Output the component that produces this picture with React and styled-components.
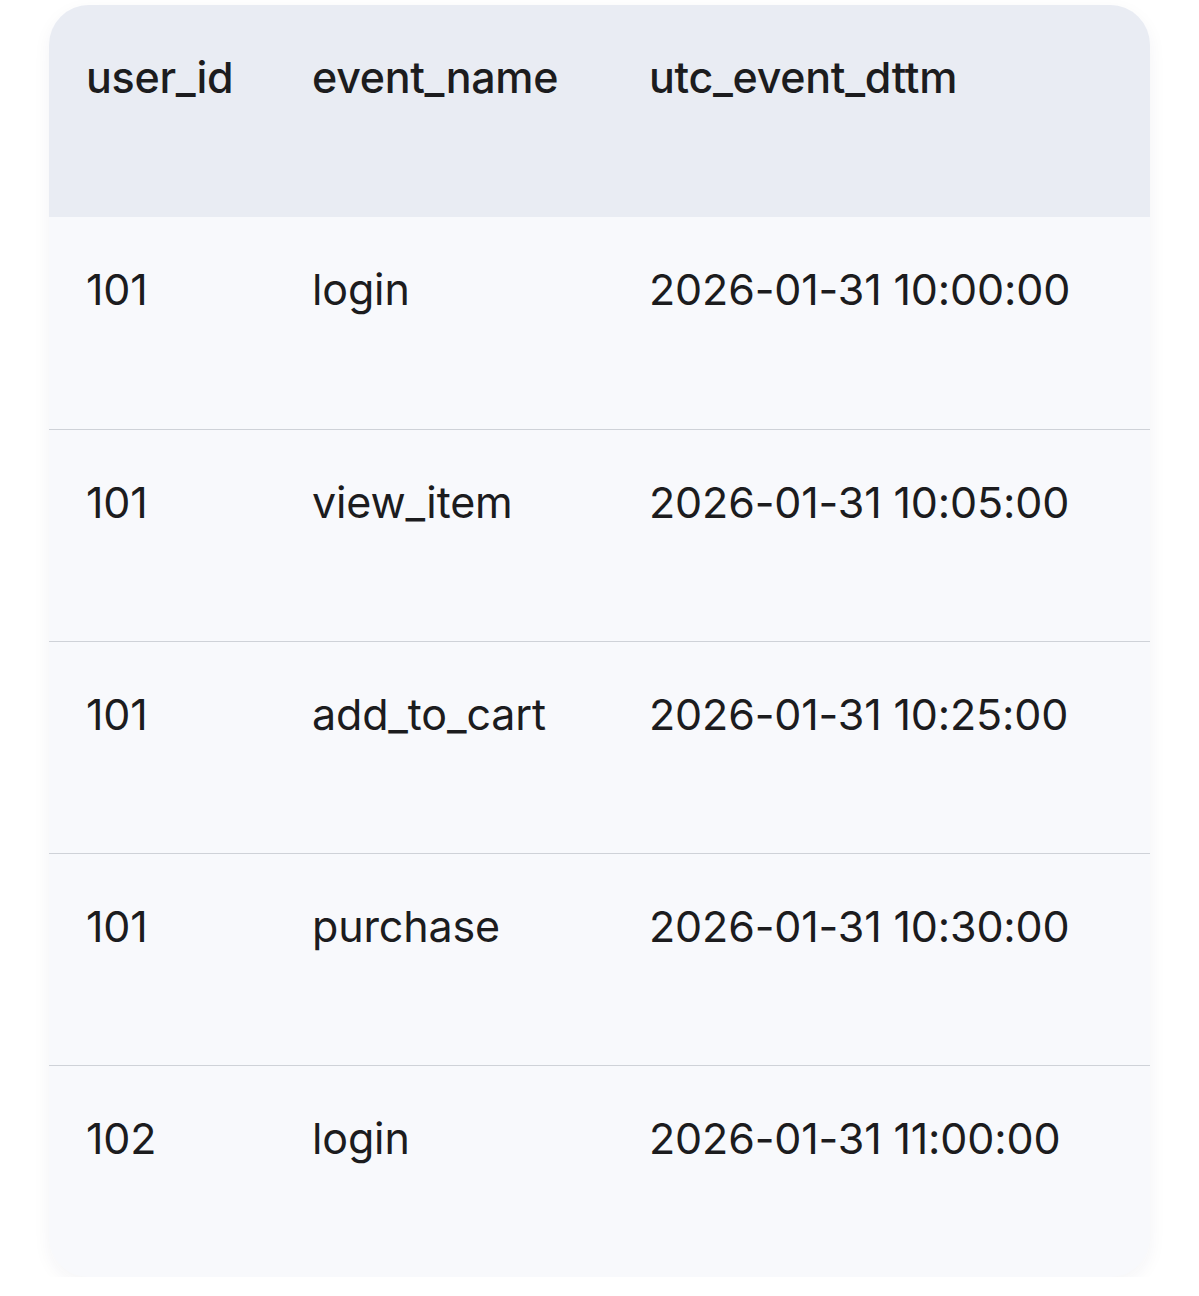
import React from 'react';
import styled, { createGlobalStyle } from 'styled-components';

const GlobalStyle = createGlobalStyle`
  html, body {
    margin: 0;
    padding: 0;
    background: #ffffff;
  }
  body {
    font-family: Inter, "Noto Sans", "Liberation Sans", sans-serif;
    color: #1c1c1e;
  }
`;

const Page = styled.div`
  padding: 5px 49px 0 49px;
  width: 1199px;
  box-sizing: border-box;
`;

const Table = styled.div`
  width: 1101px;
  border-radius: 40px;
  overflow: hidden;
  background: #f8f9fc;
  box-shadow: 0 6px 18px rgba(30, 40, 70, 0.05);
`;

const Row = styled.div`
  display: grid;
  grid-template-columns: 224px 338px 1fr;
  height: 212px;
  background: ${props => (props.header ? '#e9ecf3' : '#f8f9fc')};
  border-top: ${props => (props.divider ? '1px solid #cfd2d8' : 'none')};
  box-sizing: border-box;
`;

const Cell = styled.div`
  padding: 46px 0 0 ${props => props.pad || 37}px;
  font-size: 43px;
  line-height: 52px;
  font-weight: ${props => (props.header ? 500 : 400)};
  letter-spacing: ${props => (props.header ? '-0.3px' : '-0.15px')};
  color: #1c1c1e;
  white-space: nowrap;
`;

const columns = ['user_id', 'event_name', 'utc_event_dttm'];

const rows = [
  ['101', 'login', '2026-01-31 10:00:00'],
  ['101', 'view_item', '2026-01-31 10:05:00'],
  ['101', 'add_to_cart', '2026-01-31 10:25:00'],
  ['101', 'purchase', '2026-01-31 10:30:00'],
  ['102', 'login', '2026-01-31 11:00:00'],
];

const pads = [37, 39, 38];

const App = () => {
  return (
    <>
      <GlobalStyle />
      <Page>
        <Table>
          <Row header>
            {columns.map((c, i) => (
              <Cell header key={c} pad={pads[i]}>{c}</Cell>
            ))}
          </Row>
          {rows.map((r, idx) => (
            <Row key={idx} divider={idx > 0}>
              {r.map((v, i) => (
                <Cell key={i} pad={pads[i]}>{v}</Cell>
              ))}
            </Row>
          ))}
        </Table>
      </Page>
    </>
  );
};

export default App;
